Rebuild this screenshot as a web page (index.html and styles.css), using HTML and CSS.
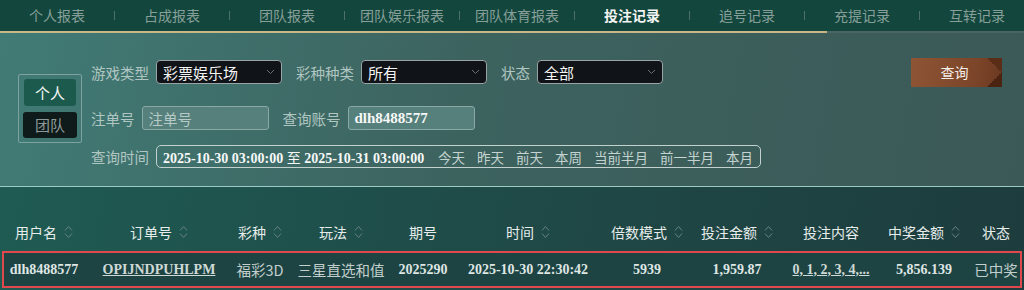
FILE: index.html
```html
<!DOCTYPE html>
<html lang="zh-CN">
<head>
	<meta charset="UTF-8">
	<title>投注记录</title>
	<link rel="stylesheet" href="styles.css">
</head>
<body>
	<div class="tabs">
		<a class="tab">个人报表</a><span class="sep"></span>
		<a class="tab">占成报表</a><span class="sep"></span>
		<a class="tab">团队报表</a><span class="sep"></span>
		<a class="tab">团队娱乐报表</a><span class="sep"></span>
		<a class="tab">团队体育报表</a><span class="sep"></span>
		<a class="tab active">投注记录</a><span class="sep"></span>
		<a class="tab">追号记录</a><span class="sep"></span>
		<a class="tab">充提记录</a><span class="sep"></span>
		<a class="tab">互转记录</a>
	</div>
	<div class="tab-line"></div>

	<div class="filter">
		<div class="scope">
			<button class="scope-btn on">个人</button>
			<button class="scope-btn">团队</button>
		</div>
		<div class="form">
			<div class="row row-1">
				<span class="label">游戏类型</span>
				<div class="select">彩票娱乐场<svg width="9" height="6" viewBox="0 0 9 6"><polyline points="1,1 4.5,4.5 8,1" fill="none" stroke="#6b6f74" stroke-width="1"/></svg></div>
				<span class="label">彩种种类</span>
				<div class="select">所有<svg width="9" height="6" viewBox="0 0 9 6"><polyline points="1,1 4.5,4.5 8,1" fill="none" stroke="#6b6f74" stroke-width="1"/></svg></div>
				<span class="label">状态</span>
				<div class="select">全部<svg width="9" height="6" viewBox="0 0 9 6"><polyline points="1,1 4.5,4.5 8,1" fill="none" stroke="#6b6f74" stroke-width="1"/></svg></div>
				<button class="btn-query">查询</button>
			</div>
			<div class="row row-2">
				<span class="label">注单号</span>
				<div class="input placeholder">注单号</div>
				<span class="label">查询账号</span>
				<div class="input value">dlh8488577</div>
			</div>
			<div class="row row-3">
				<span class="label">查询时间</span>
				<div class="date-box">
					<span class="date-range">2025-10-30 03:00:00 <span class="to">至</span> 2025-10-31 03:00:00</span>
					<span class="quick">今天</span>
					<span class="quick">昨天</span>
					<span class="quick">前天</span>
					<span class="quick">本周</span>
					<span class="quick">当前半月</span>
					<span class="quick">前一半月</span>
					<span class="quick">本月</span>
				</div>
			</div>
		</div>
	</div>

	<div class="records">
		<div class="grid head">
			<div class="cell">用户名<i class="sort"></i></div>
			<div class="cell">订单号<i class="sort"></i></div>
			<div class="cell">彩种<i class="sort"></i></div>
			<div class="cell">玩法<i class="sort"></i></div>
			<div class="cell">期号</div>
			<div class="cell">时间<i class="sort"></i></div>
			<div class="cell">倍数模式<i class="sort"></i></div>
			<div class="cell">投注金额<i class="sort"></i></div>
			<div class="cell">投注内容</div>
			<div class="cell">中奖金额<i class="sort"></i></div>
			<div class="cell">状态</div>
		</div>
		<div class="grid item">
			<div class="cell num">dlh8488577</div>
			<div class="cell num link">OPIJNDPUHLPM</div>
			<div class="cell zh">福彩3D</div>
			<div class="cell zh">三星直选和值</div>
			<div class="cell num">2025290</div>
			<div class="cell num">2025-10-30 22:30:42</div>
			<div class="cell num">5939</div>
			<div class="cell num">1,959.87</div>
			<div class="cell num link">0, 1, 2, 3, 4,...</div>
			<div class="cell num">5,856.139</div>
			<div class="cell zh">已中奖</div>
		</div>
	</div>
</body>
</html>
```

FILE: styles.css
```css
* {
	margin: 0;
	padding: 0;
	box-sizing: border-box;
}

body {
	width: 1024px;
	height: 290px;
	overflow: hidden;
	font-family: "Noto Sans CJK SC", "Noto Sans", sans-serif;
	background-color: #1e4644;
}

/* top tabs */
.tabs {
	display: flex;
	align-items: center;
	height: 31px;
	background-color: #13463d;
	overflow: hidden;
	white-space: nowrap;
}

.tab {
	flex: 0 0 114px;
	text-align: center;
	font-size: 14px;
	line-height: 31px;
	color: #86a099;
}

.tab.active {
	color: #f2f4f2;
	font-weight: bold;
}

.sep {
	flex: 0 0 1px;
	height: 9px;
	background-color: #4d7169;
}

.tab-line {
	height: 2px;
	background: linear-gradient(to right, #c8b885 827px, #4b6662 827px);
}

/* filter panel */
.filter {
	display: flex;
	height: 154px;
	padding: 27px 22px 19px 18px;
	background: linear-gradient(100deg, #417b76 0%, #3d635f 45%, #3b5957 100%);
	border-bottom: 1px solid #9ccac5;
}

.scope {
	align-self: center;
	margin-bottom: 10px;
	width: 64px;
	height: 69px;
	border: 1px solid #7ea39e;
	border-radius: 2px;
	padding: 4px;
	display: flex;
	flex-direction: column;
	gap: 6px;
}

.scope-btn {
	height: 27px;
	border: 0;
	border-radius: 3px;
	font-family: inherit;
	font-size: 15px;
	color: #8e9a98;
	background-color: #0f1a1b;
}

.scope-btn.on {
	color: #f4f6f4;
	background-color: #1b5a4d;
	margin: 0 1px;
}

.form {
	flex: 1;
	margin-left: 9px;
	display: flex;
	flex-direction: column;
}

.row {
	display: flex;
	align-items: center;
}

.row-1 {
	height: 24px;
}

.row-2 {
	height: 24px;
	margin-top: 22px;
}

.row-3 {
	height: 23px;
	margin-top: 15px;
}

.label {
	font-size: 14.5px;
	color: #b0c6c1;
	margin-right: 7px;
	white-space: nowrap;
}

.select {
	width: 126px;
	height: 24px;
	margin-right: 14px;
	padding: 0 6px;
	display: flex;
	align-items: center;
	justify-content: space-between;
	font-size: 15px;
	color: #f5f5f5;
	background-color: #101317;
	border: 1px solid #9aa3a6;
	border-radius: 4px;
}

.select:nth-of-type(3) {
	margin-right: 0;
}

.btn-query {
	margin-left: auto;
	width: 91px;
	height: 29px;
	border: 0;
	font-family: inherit;
	font-size: 14px;
	color: #f4eee8;
	padding-right: 4px;
	background:
		linear-gradient(to left top, #4a2410 50%, transparent 50%) right bottom / 15px 15px no-repeat,
		linear-gradient(to left bottom, #5a2d16 50%, transparent 50%) right top / 15px 15px no-repeat,
		linear-gradient(100deg, #8e5535 0%, #7c4529 70%, #6a3820 100%);
}

.input {
	width: 127px;
	height: 24px;
	margin-right: 14px;
	padding: 0 6px;
	display: flex;
	align-items: center;
	background-color: #56807c;
	border: 1px solid #8aa8a4;
	border-radius: 3px;
}

.input.placeholder {
	font-size: 14.5px;
	color: #b6cac6;
}

.input.value {
	font-family: "Liberation Serif", serif;
	font-weight: bold;
	font-size: 15px;
	color: #f6f8f7;
}

.date-box {
	width: 605px;
	height: 23px;
	padding-left: 6px;
	display: flex;
	align-items: center;
	border: 1px solid #c3d2cf;
	border-radius: 5px;
	white-space: nowrap;
}

.date-range {
	flex: 0 0 264px;
	overflow: hidden;
	font-family: "Liberation Serif", "Noto Sans CJK SC", serif;
	font-weight: bold;
	font-size: 14px;
	color: #f6f8f7;
	margin-right: 11px;
}

.date-range .to {
	font-family: "Noto Sans CJK SC", sans-serif;
	font-weight: normal;
}

.quick {
	flex: 0 0 auto;
	font-size: 13.5px;
	color: #c4d3d0;
	margin-right: 12px;
}

/* records table */
.records {
	height: 103px;
	padding: 26px 2px 0;
	background: linear-gradient(100deg, #1f5b53 0%, #1f4a47 50%, #1d3c3d 100%);
}

.grid {
	display: grid;
	grid-template-columns: 80px 150px 52px 110px 54px 156px 82px 98px 90px 96px 48px;
	align-items: center;
}

.head {
	height: 38px;
	padding: 0 2px;
}

.cell {
	display: flex;
	align-items: center;
	justify-content: center;
	white-space: nowrap;
}

.head .cell {
	font-size: 14px;
	color: #e6edeb;
}

.sort {
	width: 9px;
	height: 16px;
	margin-left: 7px;
	background:
		url("data:image/svg+xml;utf8,<svg xmlns='http://www.w3.org/2000/svg' width='9' height='16'><polyline points='1,6.5 4.5,2.5 8,6.5' fill='none' stroke='%2366837f' stroke-width='1'/><polyline points='1,9.5 4.5,13.5 8,9.5' fill='none' stroke='%2366837f' stroke-width='1'/></svg>") no-repeat;
}

.item {
	height: 37px;
	border: 2px solid #e0484d;
	background-color: #1d4443;
}

.item .num {
	font-family: "Liberation Serif", serif;
	font-weight: bold;
	font-size: 14px;
	color: #dfe6e4;
}

.item .zh {
	font-size: 14.5px;
	color: #c3cfcc;
}

.item .link {
	text-decoration: underline;
	color: #cfd9d6;
}
```
